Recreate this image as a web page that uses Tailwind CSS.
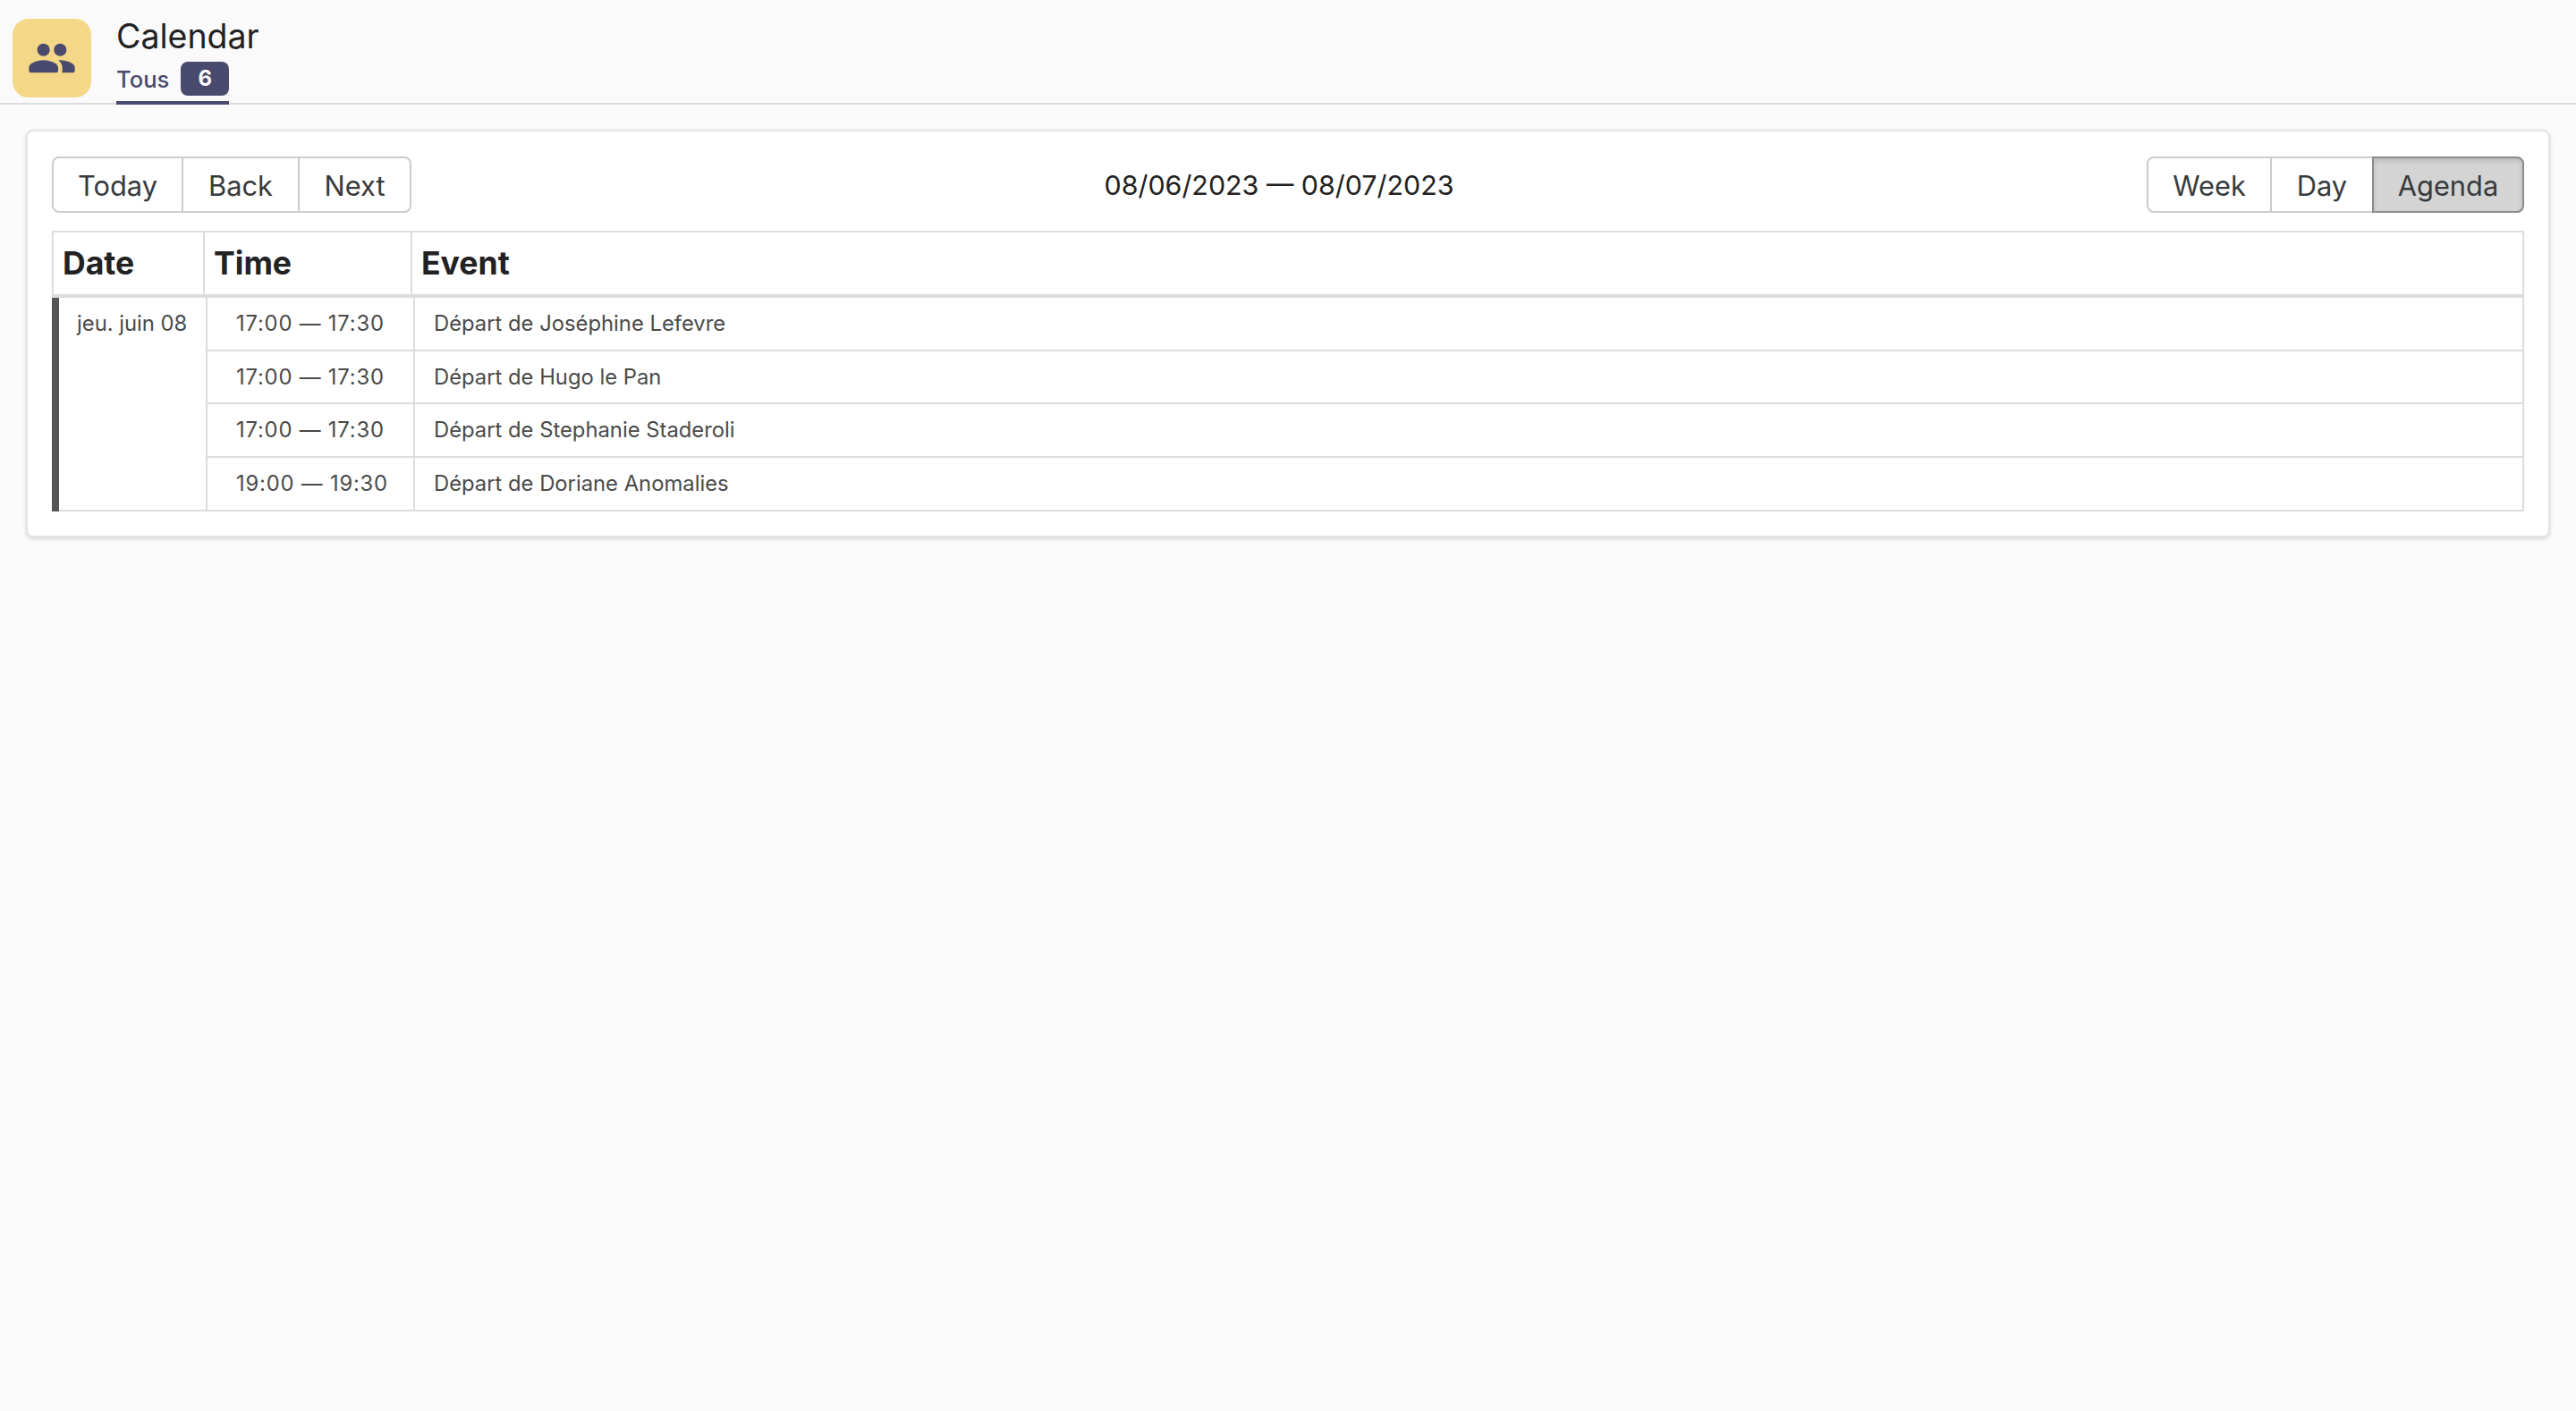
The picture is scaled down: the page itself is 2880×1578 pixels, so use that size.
<!DOCTYPE html>
<html lang="fr">
<head>
  <meta charset="UTF-8" />
  <title>Calendar</title>
  <script src="https://cdn.jsdelivr.net/npm/@tailwindcss/browser@4"></script>
</head>
<body class="font-['Inter',sans-serif] bg-[#fafafa] text-[#222] min-h-screen">

  <!-- Header -->
  <header class="h-[117px] border-b-2 border-[#ddd] flex items-start pl-[14px] pt-[21px] gap-[28px]">
    <div class="w-[88px] h-[88px] rounded-[18px] bg-[#f4d787] flex items-center justify-center">
      <svg class="w-[56px] h-[56px] fill-[#4a4a6f]" viewBox="0 0 24 24"><path d="M16 11c1.66 0 2.99-1.34 2.99-3S17.66 5 16 5c-1.66 0-3 1.34-3 3s1.34 3 3 3zm-8 0c1.66 0 2.99-1.34 2.99-3S9.66 5 8 5C6.34 5 5 6.34 5 8s1.34 3 3 3zm0 2c-2.33 0-7 1.17-7 3.5V18c0 .55.45 1 1 1h12c.55 0 1-.45 1-1v-1.5c0-2.33-4.67-3.5-7-3.5zm8 0c-.29 0-.62.02-.97.05.02.01.03.03.04.04 1.14.83 1.93 1.94 1.93 3.41V18c0 .35-.07.69-.18 1H22c.55 0 1-.45 1-1v-1.5c0-2.33-4.67-3.5-7-3.5z"/></svg>
    </div>
    <div class="flex flex-col items-start -mt-[4px]">
      <h1 class="text-[37.5px] leading-[48px] font-normal">Calendar</h1>
      <div class="mt-[4px] h-[48px] flex items-start gap-[13px] border-b-[4px] border-[#4a4a6f] text-[#4a4a6f]">
        <span class="text-[25.6px] leading-[40px] font-medium">Tous</span>
        <span class="w-[54px] h-[38px] rounded-[8px] bg-[#4a4a6f] text-white text-[24px] leading-[38px] font-bold text-center">6</span>
      </div>
    </div>
  </header>

  <main class="pt-[28px] px-[29px]">
    <div class="w-[2822px] h-[456px] bg-white border-2 border-[#e4e4e4] rounded-[8px] shadow-[0_2px_4px_rgba(0,0,0,0.14)] px-[27px] pt-[28px]">

      <!-- Toolbar -->
      <div class="flex items-center justify-between h-[63px] text-[30.8px] text-[#373a3c]">
        <div class="flex h-full border-2 border-[#ccc] rounded-[8px]">
          <button class="w-[145px] pt-[3px] border-r-2 border-[#ccc]">Today</button>
          <button class="w-[130px] pt-[3px] border-r-2 border-[#ccc]">Back</button>
          <button class="w-[123px] pt-[3px]">Next</button>
        </div>
        <span class="pt-[2px] text-[30.4px] text-[#222]">08/06/2023 — 08/07/2023</span>
        <div class="flex h-full border-2 border-[#ccc] rounded-[8px]">
          <button class="w-[138px] pt-[3px] border-r-2 border-[#ccc]">Week</button>
          <button class="w-[112px] pt-[3px]">Day</button>
          <button class="w-[170px] pt-[3px] -m-[2px] ml-0 bg-[#d4d4d4] border-2 border-[#8c8c8c] rounded-r-[8px] shadow-[inset_0_3px_5px_rgba(0,0,0,0.125)]">Agenda</button>
        </div>
      </div>

      <!-- Agenda header -->
      <table class="mt-[20px] w-[2764px] table-fixed border-collapse text-left">
        <thead>
          <tr class="h-[72px] text-[35.6px] font-bold">
            <th class="w-[169px] pl-[10px] border-2 border-b-[4px] border-[#ddd]">Date</th>
            <th class="w-[232px] pl-[10px] border-2 border-b-[4px] border-[#ddd]">Time</th>
            <th class="pl-[10px] border-2 border-b-[4px] border-[#ddd]">Event</th>
          </tr>
        </thead>
      </table>

      <!-- Agenda rows -->
      <table class="w-[2764px] table-fixed border-collapse text-left text-[23.8px] text-[#4a4a4a]">
        <tbody>
          <tr class="h-[59px]">
            <td rowspan="4" class="w-[169px] align-top pl-[20px] pt-[11px] border-l-[8px] border-l-[#555] border-b-2 border-b-[#ddd]">jeu. juin 08</td>
            <td class="w-[232px] pl-[32px] tracking-[0.8px] border-2 border-t-0 border-[#ddd]">17:00 — 17:30</td>
            <td class="pl-[21px] border-2 border-t-0 border-[#ddd]">Départ de Joséphine Lefevre</td>
          </tr>
          <tr class="h-[59px]">
            <td class="pl-[32px] tracking-[0.8px] border-2 border-[#ddd]">17:00 — 17:30</td>
            <td class="pl-[21px] border-2 border-[#ddd]">Départ de Hugo le Pan</td>
          </tr>
          <tr class="h-[60px]">
            <td class="pl-[32px] tracking-[0.8px] border-2 border-[#ddd]">17:00 — 17:30</td>
            <td class="pl-[21px] border-2 border-[#ddd]">Départ de Stephanie Staderoli</td>
          </tr>
          <tr class="h-[60px]">
            <td class="pl-[32px] tracking-[0.8px] border-2 border-[#ddd]">19:00 — 19:30</td>
            <td class="pl-[21px] border-2 border-[#ddd]">Départ de Doriane Anomalies</td>
          </tr>
        </tbody>
      </table>
    </div>
  </main>

</body>
</html>
